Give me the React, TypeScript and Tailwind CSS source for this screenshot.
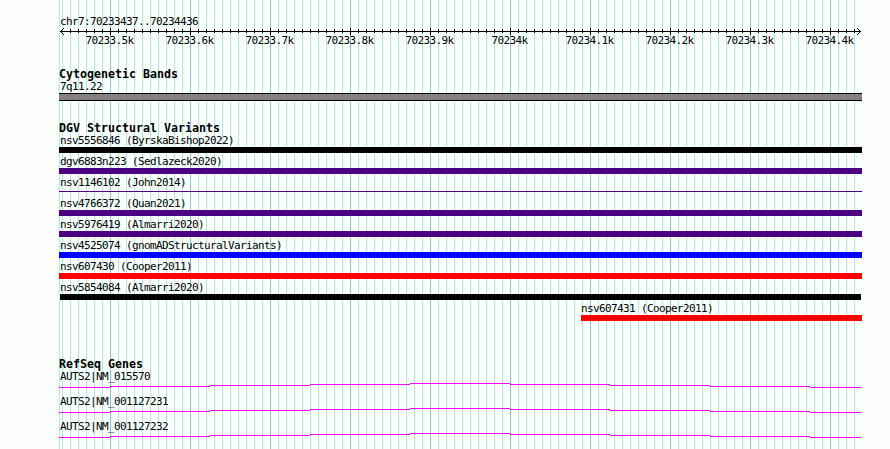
import React from "react";

interface Feature {
  name: string;
  color: string;
  offset: string;
  thin?: boolean;
}

const variants: Feature[] = [
  { name: "nsv5556846 (ByrskaBishop2022)", color: "bg-black", offset: "ml-[59px] w-[803px]" },
  { name: "dgv6883n223 (Sedlazeck2020)", color: "bg-[#4b0082]", offset: "ml-[59px] w-[803px]" },
  { name: "nsv1146102 (John2014)", color: "bg-[#4b0082]", offset: "ml-[59px] w-[803px]", thin: true },
  { name: "nsv4766372 (Quan2021)", color: "bg-[#4b0082]", offset: "ml-[59px] w-[803px]" },
  { name: "nsv5976419 (Almarri2020)", color: "bg-[#4b0082]", offset: "ml-[59px] w-[803px]" },
  { name: "nsv4525074 (gnomADStructuralVariants)", color: "bg-[#0000ff]", offset: "ml-[59px] w-[803px]" },
  { name: "nsv607430 (Cooper2011)", color: "bg-[#ff0000]", offset: "ml-[59px] w-[803px]" },
  { name: "nsv5854084 (Almarri2020)", color: "bg-black", offset: "ml-[60px] w-[801px]" },
];

const genes = ["AUTS2|NM_015570", "AUTS2|NM_001127231", "AUTS2|NM_001127232"];

const rulerLabels = [
  "70233.5k",
  "70233.6k",
  "70233.7k",
  "70233.8k",
  "70233.9k",
  "70234k",
  "70234.1k",
  "70234.2k",
  "70234.3k",
  "70234.4k",
];

// one tick every 10 bp (8px), a major one every 100 bp
const ticks = Array.from({ length: 100 }, (_, i) => 62 + i * 8);
const isMajor = (x: number) => (x - 110) % 80 === 0;

// intron line: start, end and vertical step of each segment
const intron = [
  [59, 110, 4],
  [110, 210, 3],
  [210, 310, 2],
  [310, 410, 1],
  [410, 510, 0],
  [510, 610, 1],
  [610, 710, 2],
  [710, 810, 3],
  [810, 861, 4],
];

const GridLines: React.FC = () => (
  <svg className="absolute inset-0" width="890" height="449" shapeRendering="crispEdges">
    <rect x="59" y="0" width="1" height="449" fill="#afeeee" />
    {ticks.map((x) => (
      <rect key={x} x={x} y="0" width="1" height="449" fill={isMajor(x) ? "#7ec8ee" : "#a6f0ec"} />
    ))}
  </svg>
);

const Ruler: React.FC = () => (
  <svg className="-mt-px block" width="890" height="9" shapeRendering="crispEdges">
    <rect x="60" y="4" width="801" height="1" />
    {ticks.slice(1).map((x) => (
      <rect key={x} x={x} y={isMajor(x) ? 1 : 2} width="1" height={isMajor(x) ? 7 : 4} />
    ))}
    {[1, 2, 3].map((d) => (
      <g key={d}>
        <rect x={60 + d} y={4 - d} width="1" height="1" />
        <rect x={60 + d} y={4 + d} width="1" height="1" />
        <rect x={860 - d} y={4 - d} width="1" height="1" />
        <rect x={860 - d} y={4 + d} width="1" height="1" />
      </g>
    ))}
  </svg>
);

const TrackTitle: React.FC<{ children: string }> = ({ children }) => (
  <h2 className="h-3 pl-[59px] text-[11.63px] leading-3 font-bold whitespace-pre">{children}</h2>
);

const Label: React.FC<{ children: string }> = ({ children }) => (
  <div className="h-3 pl-[1px] text-[11px] leading-3 tracking-[-0.622px] whitespace-pre">{children}</div>
);

const VariantRow: React.FC<{ feature: Feature }> = ({ feature }) => (
  <div className="flex h-[21px] flex-col pt-px">
    <div className="pl-[59px]">
      <Label>{feature.name}</Label>
    </div>
    <div className={`${feature.offset} ${feature.color} ${feature.thin ? "mt-[2px] h-px" : "h-1.5"}`} />
  </div>
);

const GeneRow: React.FC<{ name: string }> = ({ name }) => (
  <div className="h-[25px] pt-px">
    <div className="pl-[59px]">
      <Label>{name}</Label>
    </div>
    <svg className="block" width="890" height="5" shapeRendering="crispEdges">
      {intron.map(([start, end, y]) => (
        <rect key={start} x={start} y={y} width={end - start} height="1" fill="#ff00ff" />
      ))}
    </svg>
  </div>
);

const App: React.FC = () => {
  return (
    <div className="relative h-[449px] w-[890px] overflow-hidden bg-[#fdfffc] font-['DejaVu_Sans_Mono',monospace] text-black">
      <GridLines />
      <main className="relative pt-4">
        <div className="pl-[59px]">
          <Label>chr7:70233437..70234436</Label>
        </div>
        <Ruler />
        <div className="-mt-px flex h-3 pl-[69px]">
          {rulerLabels.map((label) => (
            <div key={label} className="flex w-20 shrink-0 justify-center">
              <Label>{label}</Label>
            </div>
          ))}
        </div>

        <section className="pt-[21px]">
          <TrackTitle>Cytogenetic Bands</TrackTitle>
          <div className="pt-px pl-[59px]">
            <Label>7q11.22</Label>
          </div>
          <div className="ml-[59px] h-2 w-[803px] border-y border-black bg-[#848084]" />
        </section>

        <section className="pt-[21px]">
          <TrackTitle>DGV Structural Variants</TrackTitle>
          {variants.map((feature) => (
            <VariantRow key={feature.name} feature={feature} />
          ))}
          <div className="flex h-[21px] flex-col pt-px pl-[580px]">
            <Label>nsv607431 (Cooper2011)</Label>
            <div className="ml-px h-1.5 w-[281px] bg-[#ff0000]" />
          </div>
        </section>

        <section className="pt-[35px]">
          <TrackTitle>RefSeq Genes</TrackTitle>
          {genes.map((name) => (
            <GeneRow key={name} name={name} />
          ))}
        </section>
      </main>
    </div>
  );
};

export default App;
